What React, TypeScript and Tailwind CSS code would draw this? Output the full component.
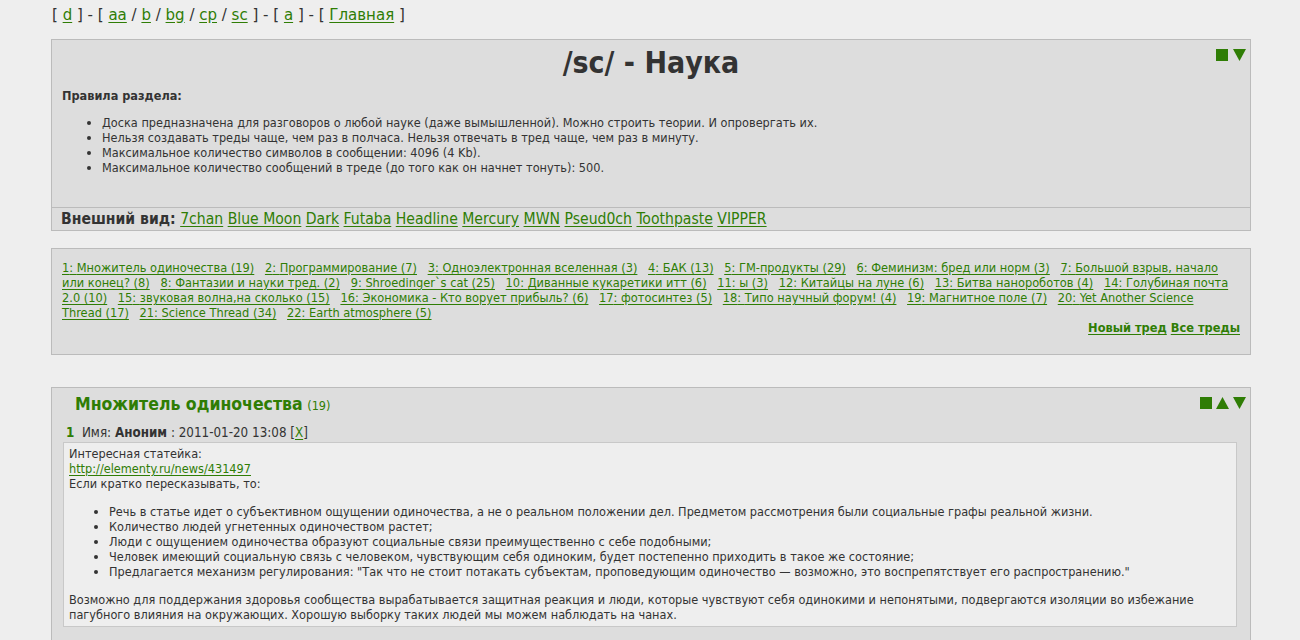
const font = { fontFamily: '"DejaVu Sans Condensed", "DejaVu Sans", sans-serif' }

const boards = ['aa', 'b', 'bg', 'cp', 'sc']
const styles = ['7chan', 'Blue Moon', 'Dark', 'Futaba', 'Headline', 'Mercury', 'MWN', 'Pseud0ch', 'Toothpaste', 'VIPPER']

const threads = [
  'Множитель одиночества (19)',
  'Программирование (7)',
  'Одноэлектронная вселенная (3)',
  'БАК (13)',
  'ГМ-продукты (29)',
  'Феминизм: бред или норм (3)',
  'Большой взрыв, начало или конец? (8)',
  'Фантазии и науки тред. (2)',
  'Shroedinger`s cat (25)',
  'Диванные кукаретики итт (6)',
  'ы (3)',
  'Китайцы на луне (6)',
  'Битва нанороботов (4)',
  'Голубиная почта 2.0 (10)',
  'звуковая волна,на сколько (15)',
  'Экономика - Кто ворует прибыль? (6)',
  'фотосинтез (5)',
  'Типо научный форум! (4)',
  'Магнитное поле (7)',
  'Yet Another Science Thread (17)',
  'Science Thread (34)',
  'Earth atmosphere (5)',
]

const rules = [
  'Доска предназначена для разговоров о любой науке (даже вымышленной). Можно строить теории. И опровергать их.',
  'Нельзя создавать треды чаще, чем раз в полчаса. Нельзя отвечать в тред чаще, чем раз в минуту.',
  'Максимальное количество символов в сообщении: 4096 (4 Kb).',
  'Максимальное количество сообщений в треде (до того как он начнет тонуть): 500.',
]

const points = [
  'Речь в статье идет о субъективном ощущении одиночества, а не о реальном положении дел. Предметом рассмотрения были социальные графы реальной жизни.',
  'Количество людей угнетенных одиночеством растет;',
  'Люди с ощущением одиночества образуют социальные связи преимущественно с себе подобными;',
  'Человек имеющий социальную связь с человеком, чувствующим себя одиноким, будет постепенно приходить в такое же состояние;',
  'Предлагается механизм регулирования: "Так что не стоит потакать субъектам, проповедующим одиночество — возможно, это воспрепятствует его распространению."',
]

const link = 'text-[#2f7d05] underline underline-offset-2'

function Square() {
  return <span className="inline-block w-[12px] h-[12px] bg-[#2f7d05]" />
}

function Tri({ up }: { up?: boolean }) {
  return (
    <svg width="13" height="12" viewBox="0 0 13 12" className="inline-block">
      <polygon points={up ? '6.5,0 13,12 0,12' : '0,0 13,0 6.5,12'} fill="#2f7d05" />
    </svg>
  )
}

export default function App() {
  return (
    <div className="min-h-screen bg-[#eeeeee] text-[#333] pb-10" style={font}>
      <div className="pl-[52px] pt-[3px] h-[39px] text-[16.7px] leading-[22px]">
        [ <a className={link}>d</a> ] - [{' '}
        {boards.map((b, i) => (
          <span key={b}>
            <a className={link}>{b}</a>
            {i < boards.length - 1 ? ' / ' : ''}
          </span>
        ))}{' '}
        ] - [ <a className={link}>a</a> ] - [ <a className={link}>Главная</a> ]
      </div>

      <div className="ml-[51px] w-[1200px] border border-[#bbb] bg-[#dddddd] relative">
        <div className="absolute right-[4px] top-[9px] flex items-center gap-[5px]">
          <Square />
          <Tri />
        </div>
        <h1 className="text-center font-bold text-[30px] leading-[36px] pt-[5px]">/sc/ - Наука</h1>
        <div className="px-[10px] pt-[7px] pb-[32px] text-[12.6px] leading-[15px]">
          <div className="font-bold">Правила раздела:</div>
          <ul className="mt-[12px] pl-[40px] list-disc">
            {rules.map((r) => (
              <li key={r}>{r}</li>
            ))}
          </ul>
        </div>
        <div className="border-t border-[#bbb] px-[9px] h-[23px] pt-[1px] text-[15.6px] leading-[21px]">
          <span className="font-bold">Внешний вид:</span>{' '}
          {styles.map((s) => (
            <span key={s}>
              <a className={link}>{s}</a>{' '}
            </span>
          ))}
        </div>
      </div>

      <div className="ml-[51px] w-[1200px] mt-[17px] border border-[#bbb] bg-[#dddddd] px-[10px] pt-[11px] h-[107px] text-[12.7px] leading-[15px]">
        <div className="pr-[8px]">
          {threads.map((t, i) => (
            <span key={t}>
              <a className={`${link} mr-[7px]`}>
                {i + 1}: {t}
              </a>{' '}
            </span>
          ))}
        </div>
        <div className="text-right font-bold">
          <a className={link}>Новый тред</a> <a className={link}>Все треды</a>
        </div>
      </div>

      <div className="ml-[51px] w-[1200px] mt-[32px] border border-[#bbb] bg-[#dddddd] relative px-[11px] pb-[20px]">
        <div className="absolute right-[4px] top-[9px] flex items-center gap-[4px]">
          <Square />
          <Tri up />
          <Tri />
        </div>
        <div className="pl-[12px] pt-[3px] h-[33px]">
          <span className="text-[#2f7d05] font-bold text-[17.5px]">Множитель одиночества</span>{' '}
          <span className="text-[#2f7d05] text-[12.6px]">(19)</span>
        </div>
        <div className="text-[13.3px] leading-[16px] pl-[3px] h-[21px] pt-[4px]">
          <span className="text-[#2f7d05] font-bold">1</span>&nbsp;&nbsp;Имя: <span className="font-bold">Аноним</span> : 2011-01-20 13:08 [<a className={link}>X</a>]
        </div>
        <div className="border border-[#c8c8c8] bg-[#eeeeee] px-[5px] pt-[3px] pb-[4px] text-[12.6px] leading-[15px] mr-[2px]">
          <div>Интересная статейка:</div>
          <a className={link}>http://elementy.ru/news/431497</a>
          <div>Если кратко пересказывать, то:</div>
          <ul className="list-disc pl-[40px] my-[13px]">
            {points.map((p) => (
              <li key={p}>{p}</li>
            ))}
          </ul>
          <div>
            Возможно для поддержания здоровья сообщества вырабатывается защитная реакция и люди, которые чувствуют себя одинокими и непонятыми, подвергаются изоляции во избежание пагубного влияния на окружающих. Хорошую выборку таких людей мы можем наблюдать на чанах.
          </div>
        </div>
      </div>
    </div>
  )
}
